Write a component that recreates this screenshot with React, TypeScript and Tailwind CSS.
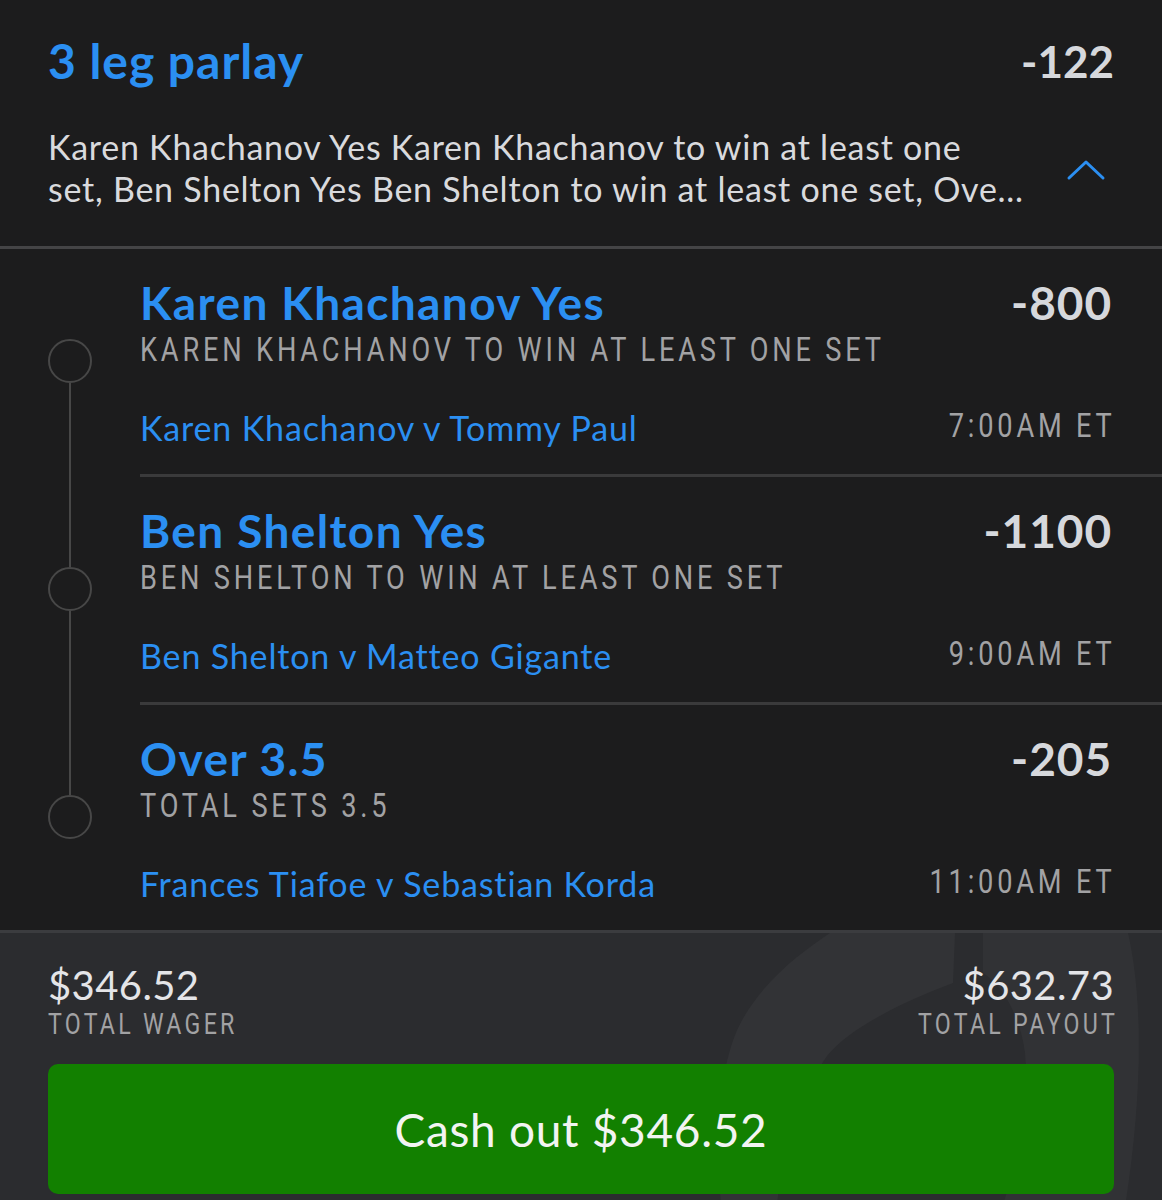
import React from 'react';

interface Leg {
  title: string;
  odds: string;
  market: string;
  match: string;
  time: string;
}

const legs: Leg[] = [
  {
    title: 'Karen Khachanov Yes',
    odds: '-800',
    market: 'Karen Khachanov to win at least one set',
    match: 'Karen Khachanov v Tommy Paul',
    time: '7:00AM ET',
  },
  {
    title: 'Ben Shelton Yes',
    odds: '-1100',
    market: 'Ben Shelton to win at least one set',
    match: 'Ben Shelton v Matteo Gigante',
    time: '9:00AM ET',
  },
  {
    title: 'Over 3.5',
    odds: '-205',
    market: 'Total sets 3.5',
    match: 'Frances Tiafoe v Sebastian Korda',
    time: '11:00AM ET',
  },
];

const sans = "font-['Lato','Open_Sans',sans-serif]";
const narrow = "font-['Roboto','Liberation_Sans',sans-serif]";

// condensed caps label: Roboto squeezed horizontally
const Caps: React.FC<{ children: React.ReactNode; right?: boolean; size?: string }> = ({ children, right, size }) => (
  <span
    className={`${narrow} ${size ?? 'text-[34px] leading-[36px]'} inline-block whitespace-nowrap uppercase tracking-[0.14em] text-[#a2a2a4] scale-x-[0.8] ${
      right ? 'origin-right -mr-[4px]' : 'origin-left'
    }`}
  >
    {children}
  </span>
);

const LegRow: React.FC<{ leg: Leg; first: boolean; last: boolean }> = ({ leg, first, last }) => (
  <div className="flex">
    {/* timeline gutter */}
    <div className="w-[140px] shrink-0 flex flex-col items-center">
      <div className={`h-[90px] w-[2px] ${first ? '' : 'bg-[#474747]'}`} />
      <div className="h-[44px] w-[44px] rounded-full border-[2px] border-[#474747]" />
      <div className={`flex-1 w-[2px] ${last ? '' : 'bg-[#474747]'}`} />
    </div>
    <div className={`flex-1 min-w-0 ${last ? '' : 'border-b-[3px] border-[#3a3a3b]'}`}>
      <div className="pr-[50px] pt-[28px] pb-[24px]">
        <div className="flex items-start justify-between">
          <div className={`${sans} text-[46px] leading-[52px] font-bold tracking-[0.03em] text-[#2b8ff2]`}>{leg.title}</div>
          <div className={`${sans} text-[46px] leading-[52px] font-bold tracking-[0.02em] text-[#d6d8dc]`}>{leg.odds}</div>
        </div>
        <div className="mt-[2px]">
          <Caps>{leg.market}</Caps>
        </div>
        <div className="mt-[39px] flex items-baseline justify-between">
          <div className={`${sans} text-[34px] leading-[44px] tracking-[0.025em] text-[#2b8ff2]`}>{leg.match}</div>
          <div className="relative -top-[4px]">
            <Caps right>{leg.time}</Caps>
          </div>
        </div>
      </div>
    </div>
  </div>
);

export default function App() {
  return (
    <div className="w-[1162px] h-[1200px] overflow-hidden bg-[#1c1c1d] flex flex-col">
      {/* header */}
      <div className="px-[48px] pt-[32px] pb-[36px] border-b-[3px] border-[#444446]">
        <div className="flex items-center justify-between">
          <div className={`${sans} text-[48px] leading-[58px] font-bold tracking-[0.02em] text-[#2b8ff2]`}>3 leg parlay</div>
          <div className={`${sans} text-[44px] leading-[58px] font-bold text-[#d6d8dc]`}>-122</div>
        </div>
        <div className="mt-[36px] flex items-center justify-between gap-[40px]">
          <p className={`${sans} min-w-0 flex-1 text-[34px] leading-[42px] tracking-[0.022em] text-[#d9dadd]`}>
            <span className="block whitespace-nowrap">Karen Khachanov Yes Karen Khachanov to win at least one</span>
            <span className="block truncate">
              set, Ben Shelton Yes Ben Shelton to win at least one set, Over 3.5 Total sets 3.5
            </span>
          </p>
          <svg width="40" height="24" viewBox="0 0 40 24" className="shrink-0 mr-[8px] mt-[4px]">
            <polyline points="3,20 20,4 37,20" fill="none" stroke="#2b8ff2" strokeWidth="3" strokeLinecap="round" strokeLinejoin="round" />
          </svg>
        </div>
      </div>

      {/* legs */}
      <div className="flex flex-col">
        {legs.map((leg, i) => (
          <LegRow key={leg.title} leg={leg} first={i === 0} last={i === legs.length - 1} />
        ))}
      </div>

      {/* footer */}
      <div className="relative flex-1 bg-[#2b2c2f] border-t-[3px] border-[#3b3c3f] overflow-hidden">
        {/* faint shield watermark */}
        <svg className="absolute left-[700px] top-0" width="462" height="280" viewBox="0 0 462 280">
          <path
            d="M130 0 L255 0 L253 50 C200 70 150 95 127 123 C100 160 82 220 76 280 L22 280 C14 210 18 140 38 95 C60 50 100 20 130 0 Z"
            fill="#ffffff"
            fillOpacity="0.035"
          />
          <path
            d="M283 0 L428 0 C444 70 442 170 424 280 L300 280 C318 230 330 170 325 120 C320 80 300 50 283 40 Z"
            fill="#ffffff"
            fillOpacity="0.03"
          />
        </svg>
        <div className="relative px-[48px] pt-[29px]">
          <div className="flex justify-between">
            <div>
              <div className={`${sans} text-[40px] leading-[46px] tracking-[0.01em] text-[#e4e5e8]`}>$346.52</div>
              <Caps size="text-[29px] leading-[32px]">Total wager</Caps>
            </div>
            <div className="flex flex-col items-end">
              <div className={`${sans} text-[40px] leading-[46px] tracking-[0.01em] text-[#e4e5e8]`}>$632.73</div>
              <Caps right size="text-[29px] leading-[32px]">Total payout</Caps>
            </div>
          </div>
          <button className={`${sans} mt-[24px] w-full h-[130px] rounded-[10px] bg-[#128000] text-[46px] tracking-[0.015em] text-[#f2f4f2]`}>
            Cash out $346.52
          </button>
        </div>
      </div>
    </div>
  );
}
